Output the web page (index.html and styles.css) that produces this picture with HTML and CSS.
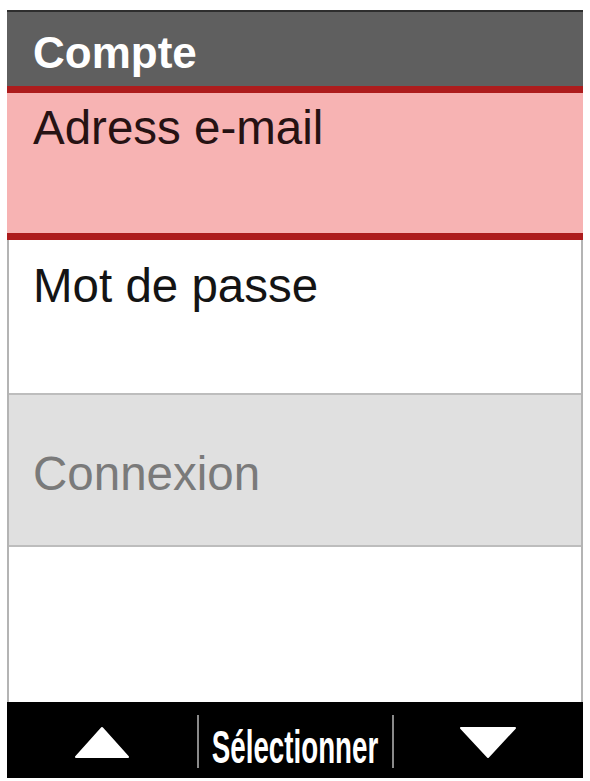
FILE: index.html
```html
<!DOCTYPE html>
<html lang="fr">
<head>
<meta charset="utf-8">
<title>Compte</title>
<link rel="stylesheet" href="styles.css">
</head>
<body>
<div class="device">
  <div class="header"><span class="title">Compte</span></div>
  <div class="row row-active"><span class="label">Adress e-mail</span></div>
  <div class="row row-plain"><span class="label">Mot de passe</span></div>
  <div class="row row-disabled"><span class="label">Connexion</span></div>
  <div class="row row-empty"></div>
  <div class="softkeys">
    <div class="key key-side">
      <svg class="tri" width="56" height="33" viewBox="0 0 56 33"><polygon points="28,2 54,31 2,31" fill="#fff" stroke="#fff" stroke-width="2" stroke-linejoin="round"/></svg>
    </div>
    <div class="sep"></div>
    <div class="key key-mid"><span class="softlabel">Sélectionner</span></div>
    <div class="sep"></div>
    <div class="key key-side">
      <svg class="tri" width="58" height="33" viewBox="0 0 58 33"><polygon points="2,2 56,2 29,31" fill="#fff" stroke="#fff" stroke-width="2" stroke-linejoin="round"/></svg>
    </div>
  </div>
</div>
</body>
</html>
```
FILE: styles.css
```css
html, body {
  margin: 0;
  padding: 0;
  background: #ffffff;
}

body {
  font-family: "Liberation Sans", Arial, sans-serif;
}

.device {
  margin: 10px 0 0 7px;
  width: 576px;
  box-sizing: border-box;
  border-left: 2px solid #b4b4b4;
  border-right: 2px solid #b4b4b4;
  display: flex;
  flex-direction: column;
}

.header {
  height: 76px;
  box-sizing: border-box;
  background: #5f5f5f;
  border-top: 2px solid #2e2e2e;
  margin: 0 -2px;
  padding: 19px 0 0 26px;
}

.title {
  display: block;
  color: #ffffff;
  font-weight: bold;
  font-size: 44px;
  line-height: 1;
}

.row {
  box-sizing: border-box;
  padding-left: 24px;
}

.label {
  display: block;
  font-size: 47.5px;
  line-height: 1;
}

.row-active {
  height: 154px;
  background: #f7b3b3;
  border-top: 7px solid #ad1c1d;
  border-bottom: 7px solid #ad1c1d;
  padding-top: 11px;
  margin: 0 -2px;
  padding-left: 26px;
}

.row-active .label {
  color: #261213;
}

.row-plain {
  height: 155px;
  padding-top: 22px;
  border-bottom: 2px solid #bdbdbd;
}

.row-plain .label {
  color: #141414;
}

.row-disabled {
  height: 152px;
  background: #e0e0e0;
  padding-top: 55px;
  border-bottom: 2px solid #bdbdbd;
}

.row-disabled .label {
  color: #7a7a7a;
}

.row-empty {
  height: 155px;
}

.softkeys {
  height: 76px;
  background: #000000;
  margin: 0 -2px;
  display: flex;
  align-items: stretch;
}

.key {
  display: flex;
  justify-content: center;
  min-width: 0;
}

.key-side {
  flex: 1 1 0;
  align-items: center;
  padding-top: 4px;
  box-sizing: border-box;
}

.key-mid {
  flex: 0 0 193px;
  align-items: flex-start;
  padding-top: 21px;
  overflow: visible;
}

.sep {
  flex: 0 0 2px;
  height: 53px;
  background: #8a8a8a;
  align-self: flex-start;
  margin-top: 13px;
}

.tri {
  display: block;
}

.softlabel {
  display: inline-block;
  color: #ffffff;
  font-weight: bold;
  font-size: 47px;
  line-height: 1;
  transform: scaleX(0.59);
  white-space: nowrap;
}
```
